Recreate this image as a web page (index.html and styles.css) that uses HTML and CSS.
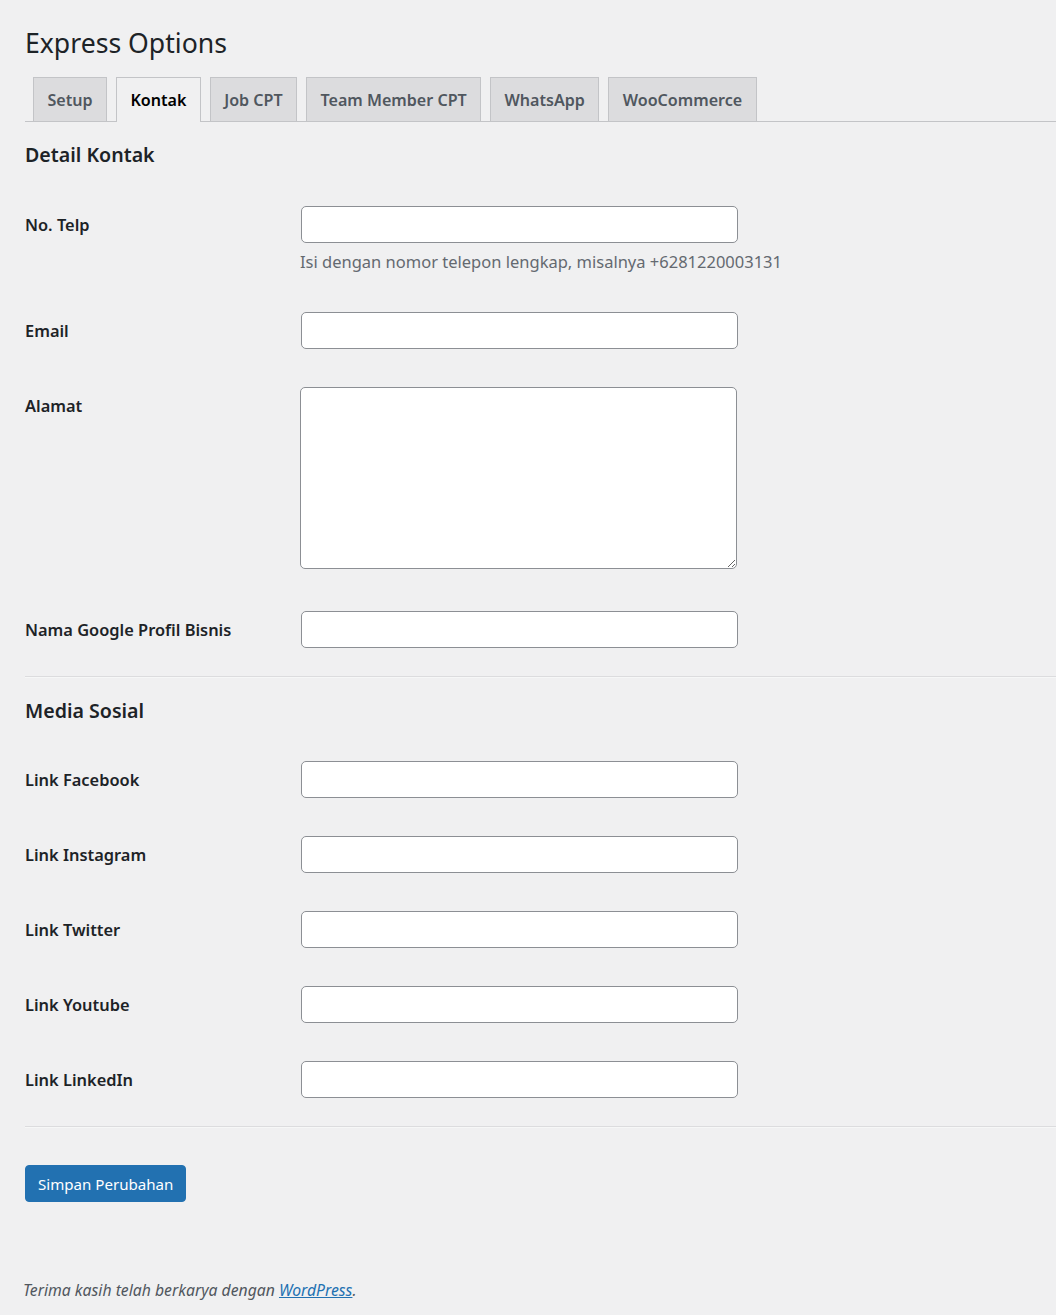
FILE: index.html
```html
<!DOCTYPE html>
<html lang="id">
<head>
<meta charset="utf-8">
<title>Express Options</title>
<link rel="stylesheet" href="styles.css">
</head>
<body>
<div class="wrap">
  <h1 class="page-title">Express Options</h1>
  <nav class="tabs">
    <a class="tab" href="#">Setup</a>
    <a class="tab tab-active" href="#">Kontak</a>
    <a class="tab" href="#">Job CPT</a>
    <a class="tab" href="#">Team Member CPT</a>
    <a class="tab" href="#">WhatsApp</a>
    <a class="tab" href="#">WooCommerce</a>
  </nav>
  <form class="options-form">
    <h2 class="section-title section-first">Detail Kontak</h2>
    <div class="form-table">
      <div class="row">
        <label class="row-label">No. Telp</label>
        <div class="row-field">
          <input class="text-input" type="text">
          <p class="description">Isi dengan nomor telepon lengkap, misalnya +6281220003131</p>
        </div>
      </div>
      <div class="row">
        <label class="row-label">Email</label>
        <div class="row-field"><input class="text-input" type="text"></div>
      </div>
      <div class="row">
        <label class="row-label">Alamat</label>
        <div class="row-field"><textarea class="text-area"></textarea></div>
      </div>
      <div class="row">
        <label class="row-label">Nama Google Profil Bisnis</label>
        <div class="row-field"><input class="text-input" type="text"></div>
      </div>
    </div>
    <hr class="sep">
    <h2 class="section-title">Media Sosial</h2>
    <div class="form-table">
      <div class="row">
        <label class="row-label">Link Facebook</label>
        <div class="row-field"><input class="text-input" type="text"></div>
      </div>
      <div class="row">
        <label class="row-label">Link Instagram</label>
        <div class="row-field"><input class="text-input" type="text"></div>
      </div>
      <div class="row">
        <label class="row-label">Link Twitter</label>
        <div class="row-field"><input class="text-input" type="text"></div>
      </div>
      <div class="row">
        <label class="row-label">Link Youtube</label>
        <div class="row-field"><input class="text-input" type="text"></div>
      </div>
      <div class="row">
        <label class="row-label">Link LinkedIn</label>
        <div class="row-field"><input class="text-input" type="text"></div>
      </div>
    </div>
    <hr class="sep">
    <div class="submit">
      <button class="btn-primary" type="button">Simpan Perubahan</button>
    </div>
  </form>
  <footer class="footer">
    <p class="footer-text">Terima kasih telah berkarya dengan <a href="#">WordPress</a>.</p>
  </footer>
</div>
</body>
</html>
```
FILE: styles.css
```css
* { box-sizing: border-box; }

html, body {
  margin: 0;
  padding: 0;
  background: #f0f0f1;
}

body {
  font-family: "Noto Sans", "Open Sans", sans-serif;
  color: #1d2327;
  font-size: 16px;
}

.wrap {
  padding: 25px 0 0 25px;
  min-height: 1315px;
}

.page-title {
  margin: 0;
  font-size: 26.6px;
  font-weight: 400;
  line-height: 37px;
  color: #1d2327;
}

.tabs {
  margin-top: 15px;
  display: flex;
  padding-left: 8px;
  border-bottom: 1px solid #c3c4c7;
  height: 45px;
}

.tab {
  display: block;
  height: 44px;
  line-height: 44px;
  padding: 0 13.5px;
  margin-right: 8.75px;
  border: 1px solid #c3c4c7;
  border-bottom: none;
  background: #dcdcde;
  color: #50575e;
  font-size: 16.1px;
  font-weight: 600;
  text-decoration: none;
}

.tab-active {
  background: #f0f0f1;
  color: #000;
  height: 45px;
}

.section-title {
  margin: 19px 0 18px;
  font-size: 19.6px;
  font-weight: 600;
  line-height: 28px;
  color: #1d2327;
}

.sep + .section-title {
  margin-top: 19px;
  margin-bottom: 17px;
}

.row {
  display: grid;
  grid-template-columns: 276px 437px;
  padding: 19px 0;
}

.row-label {
  padding-top: 6px;
  line-height: 26px;
  font-size: 16.4px;
  font-weight: 600;
  color: #1d2327;
}

.text-input {
  display: block;
  width: 437px;
  height: 37px;
  margin: 0;
  border: 1px solid #8c8f94;
  border-radius: 5px;
  background: #fff;
  font: inherit;
}

.text-area {
  display: block;
  width: 437px;
  height: 182px;
  margin: 0 0 4px -1px;
  border: 1px solid #8c8f94;
  border-radius: 5px;
  background: #fff;
  font: inherit;
}

.description {
  margin: 6px 0 0 -1px;
  line-height: 25px;
  font-size: 16.5px;
  color: #646970;
  white-space: nowrap;
}

.sep {
  margin: 9px 0 0;
  height: 0;
  border: 0;
  border-top: 1px solid #dcdcde;
  border-bottom: 1px solid #f6f7f7;
}

.submit {
  padding-top: 37px;
}

.btn-primary {
  height: 37px;
  padding: 0 12px;
  border: 1px solid #2271b1;
  border-radius: 4px;
  background: #2271b1;
  color: #fff;
  font-family: inherit;
  font-size: 15.1px;
  cursor: pointer;
}

.footer {
  padding-top: 77px;
}

.footer-text {
  margin: 0 0 0 -2px;
  font-size: 15.75px;
  font-style: italic;
  line-height: 22px;
  color: #50575e;
}

.footer-text a {
  color: #2271b1;
}
```
